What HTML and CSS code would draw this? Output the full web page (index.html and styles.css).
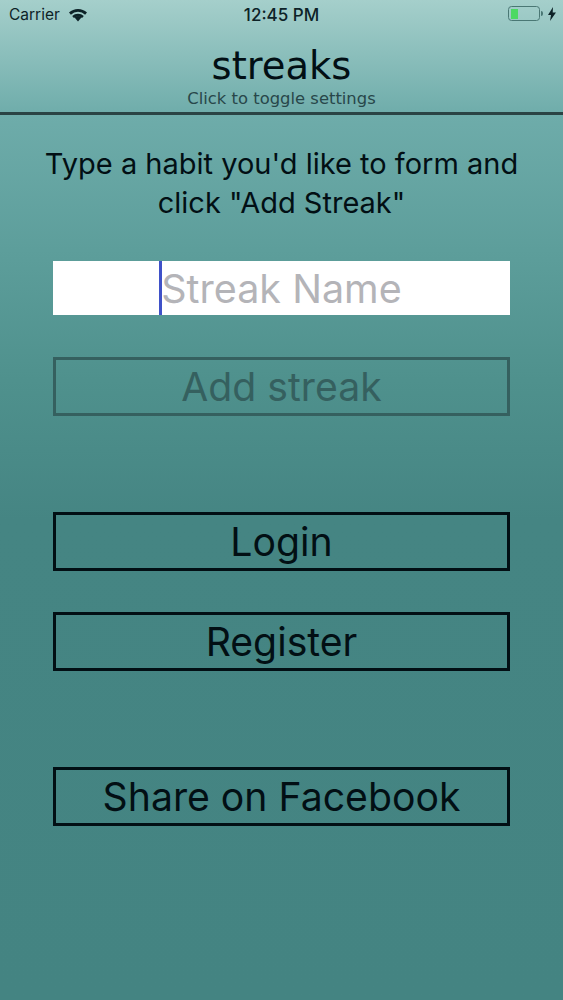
FILE: index.html
```html
<!DOCTYPE html>
<html lang="en">
<head>
<meta charset="utf-8">
<title>streaks</title>
<link rel="stylesheet" href="styles.css">
</head>
<body>
<div class="screen">
  <div class="status">
    <div class="status-left">
      <span class="carrier">Carrier</span>
      <svg class="wifi" width="20" height="15" viewBox="0 0 20 15"><path d="M10 14.5 6.6 10.6a5 5 0 0 1 6.8 0Z" fill="#0d2227"/><path d="M1 5.6a13 13 0 0 1 18 0l-1.9 2.1a10.300 10.300 0 0 0-14.200 0Z" fill="#0d2227"/><path d="M4.200 9.100a8.500 8.500 0 0 1 11.600 0l-1.700 1.900a6 6 0 0 0-8.200 0Z" fill="#0d2227"/></svg>
    </div>
    <span class="time">12:45 PM</span>
    <div class="status-right">
      <div class="battery"><div class="battery-fill"></div></div>
      <div class="battery-tip"></div>
      <svg class="bolt" width="8" height="14" viewBox="0 0 8 14"><path d="M5 0 0 8h3l-1 6 6-8.500H4.700Z" fill="#0d2227"/></svg>
    </div>
  </div>
  <header class="header">
    <h1 class="title">streaks</h1>
    <p class="subtitle">Click to toggle settings</p>
  </header>
  <main class="content">
    <p class="intro">Type a habit you'd like to form and click "Add Streak"</p>
    <div class="field"><span class="caret"></span><span class="placeholder">Streak Name</span></div>
    <div class="btn btn-disabled">Add streak</div>
    <div class="btn btn-login">Login</div>
    <div class="btn btn-register">Register</div>
    <div class="btn btn-share">Share on Facebook</div>
  </main>
</div>
</body>
</html>
```
FILE: styles.css
```css
* { box-sizing: border-box; margin: 0; padding: 0; }
html, body { width: 563px; height: 1000px; overflow: hidden; }
body { font-family: "Inter", "Liberation Sans", sans-serif; color: #020f14; }
.screen {
  width: 563px; height: 1000px;
  background: linear-gradient(180deg, #a5cfcb 0px, #6eacaa 115px, #5d9e9b 250px, #4f918d 380px, #458583 520px, #448482 1000px);
}
.status { height: 29px; display: flex; align-items: center; justify-content: space-between; padding: 0 7px 0 9px; position: relative; font-size: 15.500px; color: #0d2227; }
.status-left { display: flex; align-items: center; gap: 8px; }
.carrier { font-weight: 400; }
.wifi { display: block; }
.time { font-weight: 500; font-size: 17px; position: absolute; left: 0; right: 0; text-align: center; }
.status-right { display: flex; align-items: center; padding-bottom: 2px; }
.battery { width: 32px; height: 15px; border: 1.500px solid #4a7774; border-radius: 3.500px; padding: 1.500px; }
.battery-fill { width: 7px; height: 100%; background: #4cd964; }
.battery-tip { width: 2px; height: 5px; background: #4a7774; margin: 0 5px 0 1px; border-radius: 0 2px 2px 0; }
.bolt { display: block; }
.header { height: 86px; border-bottom: 3px solid #2a4344; text-align: center; padding-top: 15px; font-family: "DejaVu Sans", sans-serif; }
.title { font-size: 38.500px; font-weight: 400; line-height: 44px; }
.subtitle { font-size: 16.400px; line-height: 19px; color: #28474a; margin-top: 1px; }
.content { display: flex; flex-direction: column; align-items: center; }
.intro { width: 510px; text-align: center; font-size: 29px; line-height: 39px; margin-top: 29px; }
.field { width: 457.500px; height: 54px; background: #fff; margin-top: 39px; padding-top: 1px; display: flex; align-items: center; justify-content: center; font-size: 39.500px; color: #b4b4b8; position: relative; }
.caret { position: absolute; left: 106.500px; top: 0; bottom: 0; width: 2.500px; background: #3f51c8; }
.btn { width: 457.500px; height: 59px; border: 3px solid #020f14; display: flex; align-items: center; justify-content: center; font-size: 39.200px; }
.btn-disabled { margin-top: 42px; border-color: #35605f; color: #35605f; }
.btn-login { margin-top: 96px; }
.btn-register { margin-top: 41px; }
.btn-share { margin-top: 96px; }
```
